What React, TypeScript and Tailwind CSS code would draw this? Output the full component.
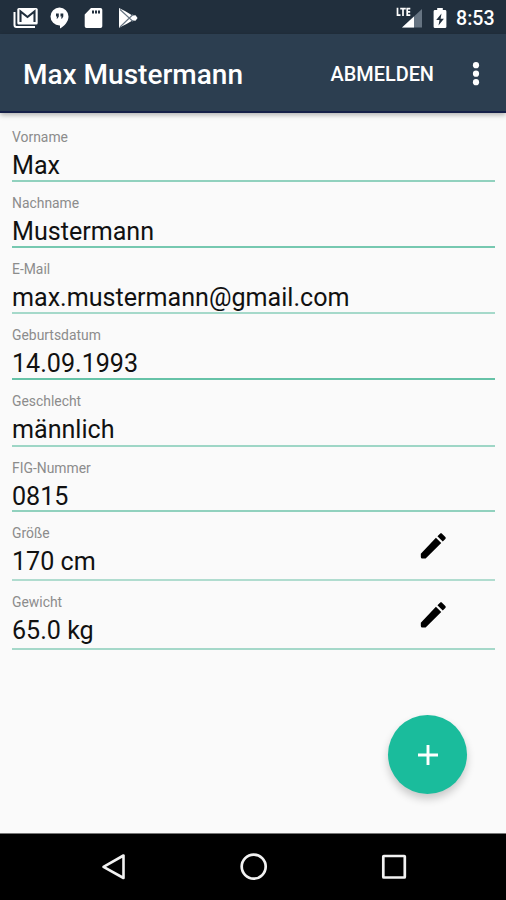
import React from 'react';

type Field = {
  label: string;
  value: string;
  row: string;
  line: string;
  editable?: boolean;
};

const fields: Field[] = [
  { label: 'Vorname', value: 'Max', row: 'h-[66px]', line: 'bg-[#91d1be]' },
  { label: 'Nachname', value: 'Mustermann', row: 'h-[66px]', line: 'bg-[#76c8b0]' },
  { label: 'E-Mail', value: 'max.mustermann@gmail.com', row: 'h-[66px]', line: 'bg-[#a5d9ca]' },
  { label: 'Geburtsdatum', value: '14.09.1993', row: 'h-[66px]', line: 'bg-[#66c2a7]' },
  { label: 'Geschlecht', value: 'männlich', row: 'h-[67px]', line: 'bg-[#9ed6c6]' },
  { label: 'FIG-Nummer', value: '0815', row: 'h-[65px]', line: 'bg-[#91d1be]' },
  { label: 'Größe', value: '170 cm', row: 'h-[69px]', line: 'bg-[#b0dccf]', editable: true },
  { label: 'Gewicht', value: '65.0 kg', row: 'h-[69px]', line: 'bg-[#a5d8c9]', editable: true },
];

function StatusBar() {
  return (
    <div className="flex h-[34px] shrink-0 items-center bg-[#212f3d] pt-[1px] text-white">
      <svg className="ml-[13px] h-[22px] w-[25px]" viewBox="0 0 25 22">
        <path d="M1.500 5v13q0 2 2 2H22" fill="none" stroke="#fff" strokeWidth="2" />
        <rect x="4.300" y="1" width="20.400" height="16.600" rx="1.500" fill="#fff" />
        <path d="M7.500 15V4.500l7 5.500 7-5.500V15" fill="none" stroke="#212f3d" strokeWidth="2.100" />
      </svg>
      <svg className="ml-[12px] h-[22px] w-[19px]" viewBox="0 0 19 22">
        <path d="M9.500 .5a9 9 0 0 1 9 9c0 5-4 9.500-8.500 12V18.500h-.5a9 9 0 0 1 0-18" fill="#fff" />
        <path d="M6 6.500h2.800v3L7.600 11.500H6.500l.7-2H6zm4.500 0h2.800v3l-1.200 2H11l.7-2h-1.200z" fill="#212f3d" />
      </svg>
      <svg className="ml-[15px] h-[22px] w-[19px]" viewBox="0 0 19 22">
        <path d="M7 1h9.500q1.800 0 1.800 1.800v16.400q0 1.800-1.800 1.800h-14Q.7 21 .7 19.200V7.500z" fill="#fff" />
        <path d="M8 3.500h2v3H8zm3 0h2v3h-2zm3 0h2v3h-2z" fill="#212f3d" />
      </svg>
      <svg className="ml-[15px] h-[22px] w-[21px]" viewBox="0 0 21 22">
        <path d="M1 1v19.800q7.500-3.500 13.500-7.300l3 .3L19.600 11l-2.100-2.800-3 .3Q8 4.200 1 1z" fill="#fff" />
        <path d="M2 2.500l13 12M2 20L15 7.500" fill="none" stroke="#667482" strokeWidth="1.100" />
      </svg>
      <svg className="ml-auto h-[24px] w-[27px]" viewBox="0 0 27 24">
        <path d="M26 3v18.500H6z" fill="#667482" />
        <path d="M18 10.400v11.100H6z" fill="#fff" />
        <path d="M0 0h14.800v11.500H0z" fill="#212f3d" />
        <path d="M1.500 1.800v7.400h3M4.200 2.600h5.600M7 2.600V10M14.300 2.600h-3.100v6.600h3.100M11.200 5.900h3" fill="none" stroke="#fff" strokeWidth="1.700" />
      </svg>
      <svg className="ml-[10px] h-[22px] w-[14px]" viewBox="0 0 14 22">
        <path d="M4.200 1h5.600v2h2.200q1.400 0 1.400 1.400v15.400q0 1.300-1.400 1.300H2Q.6 21.100.6 19.800V4.400Q.6 3 2 3h2.200z" fill="#fff" />
        <path d="M8.500 6.500L3.200 13h3.300l-1 5.500 5.400-6.700H7.600z" fill="#212f3d" />
      </svg>
      <span className="mr-[11px] ml-[9px] w-[39px] pt-[2px] text-[19.600px] leading-[31px] font-medium whitespace-nowrap">8:53</span>
    </div>
  );
}

function Toolbar() {
  return (
    <header className="z-10 flex h-[79px] shrink-0 items-center border-b-2 border-[#151f48] bg-[#2c3e50] pt-[2px] text-white shadow-[0_2px_5px_rgba(0,0,0,0.3)]">
      <h1 className="ml-[23px] pt-[3px] text-[28px] leading-none font-medium whitespace-nowrap">Max Mustermann</h1>
      <button className="ml-auto pt-[3px] text-[19.900px] leading-none font-medium">ABMELDEN</button>
      <svg className="mr-[26px] ml-[38px] h-[24px] w-[8px]" viewBox="0 0 8 24" fill="#fff">
        <circle cx="4" cy="3.200" r="3.100" />
        <circle cx="4" cy="11.700" r="3.100" />
        <circle cx="4" cy="20.200" r="3.100" />
      </svg>
    </header>
  );
}

function FieldRow({ label, value, row, line, editable }: Field) {
  return (
    <div className={`flex flex-col ${row}`}>
      <div className="flex min-h-0 flex-1 items-start">
        <div className="flex flex-1 flex-col">
          <span className="mt-[13px] text-[13.900px] leading-[16px] text-[#8c8c8c]">{label}</span>
          <span className="mt-[7px] text-[25.100px] leading-[28px] text-[#111]">{value}</span>
        </div>
        {editable && (
          <svg className="mt-[17px] mr-[45px] h-[34px] w-[34px]" viewBox="0 0 24 24" fill="#000">
            <path d="M3.400 17.400v2.300q0 1.100 1.100 1.100h2.300L17.810 9.940l-3.750-3.750zM20.710 7.040c.39-.39.39-1.020 0-1.410l-2.340-2.340c-.39-.39-1.020-.39-1.410 0l-1.830 1.830 3.750 3.750 1.830-1.830z" />
          </svg>
        )}
      </div>
      <div className={`h-[2px] shrink-0 ${line}`} />
    </div>
  );
}

export default function App() {
  return (
    <div className="flex h-[900px] w-[506px] flex-col overflow-hidden bg-[#fafafa] font-[Roboto,sans-serif]">
      <StatusBar />
      <Toolbar />
      <main className="flex flex-1 flex-col pt-[3px] pr-[11px] pl-[12px]">
        {fields.map((f) => (
          <FieldRow key={f.label} {...f} />
        ))}
        <button className="mt-[65px] mr-[28px] flex size-[79px] shrink-0 items-center justify-center self-end rounded-full bg-[#1abc9c] shadow-[0_5px_9px_rgba(0,0,0,0.2)]">
          <svg className="size-[22px]" viewBox="0 0 22 22">
            <path d="M11 1v20M1 11h20" stroke="#fff" strokeWidth="2.900" />
          </svg>
        </button>
      </main>
      <nav className="flex h-[67px] shrink-0 items-center justify-between border-t border-[#777] bg-black pr-[98px] pl-[100px]">
        <svg className="size-[28px]" viewBox="0 0 28 28">
          <path d="M23.500 2.500v22.500L3.500 13.800z" fill="none" stroke="#f2f2f2" strokeWidth="2.600" strokeLinejoin="round" />
        </svg>
        <svg className="size-[28px]" viewBox="0 0 28 28">
          <circle cx="13.700" cy="13.600" r="12" fill="none" stroke="#f2f2f2" strokeWidth="2.700" />
        </svg>
        <svg className="size-[28px]" viewBox="0 0 28 28">
          <rect x="3.300" y="3" width="21.500" height="21.500" rx=".5" fill="none" stroke="#f2f2f2" strokeWidth="2.700" />
        </svg>
      </nav>
    </div>
  );
}
